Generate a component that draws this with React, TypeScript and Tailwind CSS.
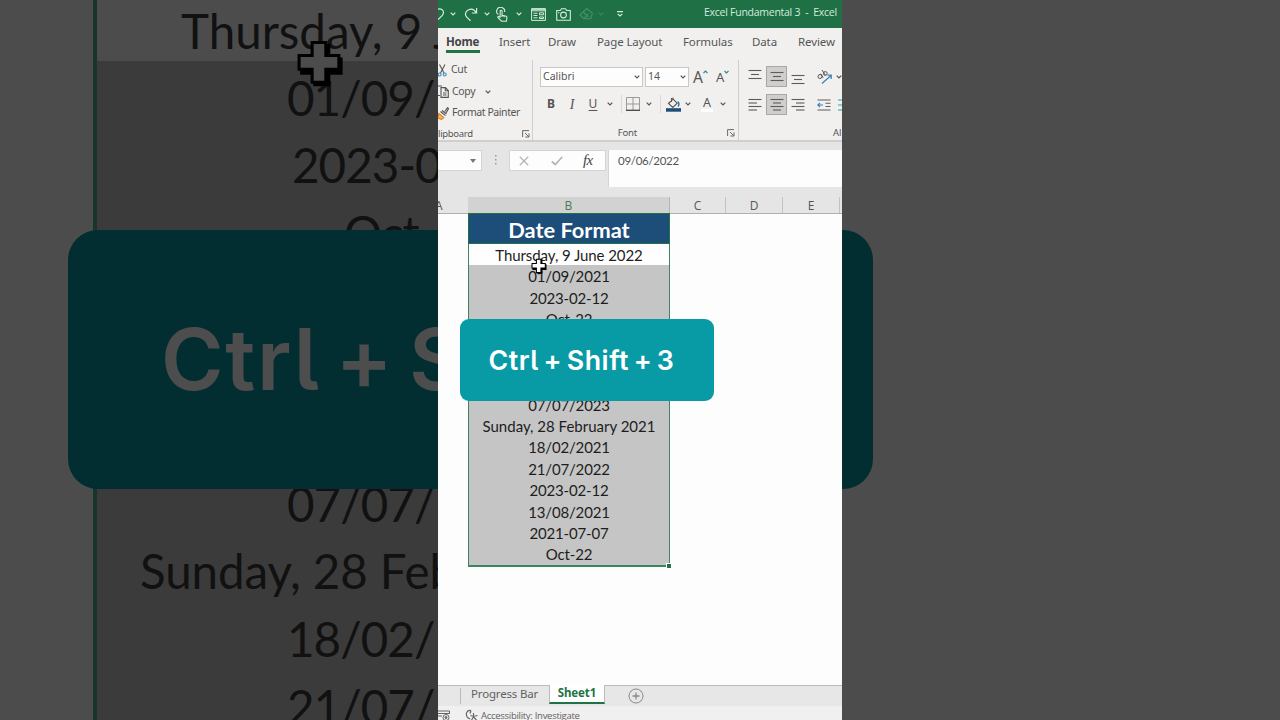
import type { ReactNode } from "react";

// Blank rows sit under the shortcut banner
const dates = [
  "Thursday, 9 June 2022",
  "01/09/2021",
  "2023-02-12",
  "Oct-22",
  "",
  "",
  "",
  "07/07/2023",
  "Sunday, 28 February 2021",
  "18/02/2021",
  "21/07/2022",
  "2023-02-12",
  "13/08/2021",
  "2021-07-07",
  "Oct-22",
];

function Chevron({ className = "" }: { className?: string }) {
  return (
    <svg viewBox="0 0 6 4" className={`h-[4px] w-[6px] shrink-0 ${className}`} fill="none" stroke="currentColor" strokeWidth="1.2">
      <path d="M0.7 0.7 3 3 5.3 0.7" />
    </svg>
  );
}

function Cell({ w, children }: { w: string; children?: ReactNode }) {
  return <div className={`flex shrink-0 items-center justify-center ${w}`}>{children}</div>;
}

function Lines({ rows }: { rows: number[][] }) {
  return (
    <svg viewBox="0 0 14 16" className="h-4 w-3.5" stroke="#5c5c5c" strokeWidth="1.1">
      {rows.map(([x1, x2, y]) => (
        <path key={y} d={`M${x1} ${y}H${x2}`} />
      ))}
    </svg>
  );
}

function Launcher() {
  return (
    <svg viewBox="0 0 8 8" className="h-2 w-2 shrink-0" fill="none" stroke="#5a5a5a" strokeWidth="0.9">
      <path d="M0.6 7V0.6H7M3 3l3.6 3.6M7 3.4V7H3.4" />
    </svg>
  );
}

function Cursor({ className }: { className: string }) {
  return (
    <svg viewBox="0 0 14 14" className={className}>
      <path d="M5 1.4h5v4h3.6v5H10v3.4H5v-3.4H1.2V6H5z" fill="#000" />
      <path d="M4.7 1h4v3.8h3.8v4H8.7v3.8h-4V8.8H0.9v-4h3.8z" fill="#fff" stroke="#000" strokeWidth="0.9" />
    </svg>
  );
}

function TitleBar() {
  return (
    <div className="flex h-7 shrink-0 items-center bg-[#1f7145] text-[#d5eadd]">
      <Cell w="w-2">
        <svg viewBox="0 0 8 14" className="h-3.5 w-2" fill="none" stroke="currentColor" strokeWidth="1.2">
          <path d="M0 2.2c3-.8 5.5.6 5.5 3.6C5.5 8 3 10 0 12.5" />
        </svg>
      </Cell>
      <Cell w="w-3.5"><Chevron /></Cell>
      <Cell w="w-[22px]">
        <svg viewBox="0 0 14 15" className="h-[15px] w-3.5" fill="none" stroke="currentColor" strokeWidth="1.2">
          <path d="M12.6 1v5H7.8M12.3 5.7C10.3 2.5 7 1.6 4.2 3 1.2 4.500.6 8 2.8 10.200L6.5 13.8" />
        </svg>
      </Cell>
      <Cell w="w-2.5"><Chevron /></Cell>
      <Cell w="w-5">
        <svg viewBox="0 0 12 15" className="h-[15px] w-3" fill="none" stroke="currentColor" strokeWidth="1.1">
          <path d="M2.3 7.5A4 4 0 1 1 8.6 5M4.2 10.5V4.3c0-1.4 1.9-1.4 1.9 0v3.9l3.6.8c1 .3 1.3 1 1.2 1.8l-.5 3.4H5.6L2 10.7c-.5-1 .7-1.7 1.4-.9l.8.8M6 8v2M8 8.6v1.7" />
        </svg>
      </Cell>
      <Cell w="w-3.5"><Chevron /></Cell>
      <Cell w="w-6">
        <svg viewBox="0 0 15 13" className="h-[13px] w-[15px]" fill="none" stroke="currentColor" strokeWidth="1">
          <path d="M.6.6h13.8v11.800H.6zM.6 2.800h13.8M.6 1.700h13.8M2.5 5.300h4M2.5 7.500h4M2.5 9.800h4M8.500 4.800h4v2h-4zM8.500 9h4v1.500h-4z" />
        </svg>
      </Cell>
      <Cell w="w-[26px]">
        <svg viewBox="0 0 15 13" className="h-[13px] w-[15px]" fill="none" stroke="currentColor" strokeWidth="1.1">
          <path d="M.7 2.5h3.6L5.5.8h4l1.2 1.7h3.6v9.8H.7z" />
          <circle cx="7.5" cy="7" r="2.9" />
          <path d="M2.3 4.6h1" />
        </svg>
      </Cell>
      <Cell w="w-5">
        <svg viewBox="0 0 15 14" className="h-3.5 w-[15px] text-[#47906a]" fill="none" stroke="currentColor" strokeWidth="1.1">
          <path d="M1 8 7.8 1.5l5.5 4.7-1.5 5.5H5zM4 5l5.5 5M5 11.7l4.5-5" />
        </svg>
      </Cell>
      <Cell w="w-2.5"><Chevron className="text-[#3c8660]" /></Cell>
      <Cell w="w-7">
        <svg viewBox="0 0 6 6" className="h-1.5 w-1.5" fill="none" stroke="currentColor" strokeWidth="1.1">
          <path d="M0 .6h6M.7 2.8 3 5l2.3-2.2" />
        </svg>
      </Cell>
      <span className="ml-[70px] -mt-1 whitespace-pre font-['Open_Sans'] text-[10.5px] font-medium leading-none tracking-[-0.025em]">
        {"Excel Fundamental 3  -  Excel"}
      </span>
    </div>
  );
}

function RibbonTabs() {
  return (
    <div className="flex h-7 shrink-0 bg-[#f1f0ef] pl-2 text-[11.5px] leading-7 tracking-[-0.01em] text-[#555]">
      <div className="w-[53px] shrink-0">
        <div className="h-[25px] w-[34px] border-b-[3px] border-[#217346] font-bold tracking-[-0.02em] text-[#444]">Home</div>
      </div>
      <span className="w-[49px] shrink-0">Insert</span>
      <span className="w-[49px] shrink-0">Draw</span>
      <span className="w-[86px] shrink-0">Page Layout</span>
      <span className="w-[69px] shrink-0">Formulas</span>
      <span className="w-[46px] shrink-0">Data</span>
      <span>Review</span>
    </div>
  );
}

function ClipboardGroup() {
  return (
    <div className="flex w-[95px] shrink-0 flex-col border-r border-[#d0cfce] text-[10.5px] tracking-[-0.03em]">
      <div className="flex h-5 items-center">
        <svg viewBox="0 0 9 13" className="mr-1 h-[13px] w-[9px]" fill="none" strokeWidth="1.1">
          <path d="M1.5.5 6 9M7 .5 2.5 9" stroke="#555" />
          <circle cx="1.6" cy="10.5" r="1.5" stroke="#3a8dbb" />
          <circle cx="6.7" cy="10.5" r="1.5" stroke="#3a8dbb" />
        </svg>
        Cut
      </div>
      <div className="flex h-[23px] items-center">
        <svg viewBox="0 0 11 13" className="mr-[3px] h-[13px] w-[11px]" fill="none" stroke="#555" strokeWidth="1.1">
          <path d="M0 1h4M0 10.5h2M3 2.6h4.5L10.3 5.5v6.9H3zM7.3 2.8v2.9h3M5 8h3.5M5 10h3.5" />
        </svg>
        Copy
        <Chevron className="ml-2.5" />
      </div>
      <div className="flex h-[20px] items-center">
        <svg viewBox="0 0 11 13" className="mr-[3px] h-[13px] w-[11px]" fill="none" strokeWidth="1.2">
          <path d="M.8 6.5 5.8 10.5 3.5 12.5 0 11z" fill="#f3b46a" stroke="#dd8a35" />
          <path d="M2.5 4.5 7.5 8.6M4 3.500 8.5 7M6.8 4.5 9.500.7l1 1-2.3 4" stroke="#555" />
        </svg>
        <span className="tracking-[-0.04em]">Format Painter</span>
      </div>
      <div className="flex h-[22px] items-center justify-between pr-[2px] text-[9.5px]">
        <span>lipboard</span>
        <Launcher />
      </div>
    </div>
  );
}

function FontGroup() {
  return (
    <div className="flex w-[206px] shrink-0 flex-col border-r border-[#d0cfce]">
      <div className="ml-[7px] mt-[7px] flex h-5 items-center text-[10.5px]">
        <div className="flex h-5 w-[103px] items-center justify-between border border-[#c9c8c7] bg-[#fdfdfd] px-0.5">
          Calibri
          <Chevron />
        </div>
        <div className="ml-0.5 flex h-5 w-11 items-center justify-between border border-[#c9c8c7] bg-[#fdfdfd] px-0.5">
          14
          <Chevron />
        </div>
        <div className="ml-1 flex w-[23px] items-start text-[15.5px] leading-[18px]">
          A
          <svg viewBox="0 0 5 4" className="mt-0.5 h-1 w-[5px]" fill="none" stroke="#2b8a8a" strokeWidth="1.1"><path d="M.5 3 2.5 1l2 2" /></svg>
        </div>
        <div className="flex items-start text-[13px] leading-[18px]">
          A
          <svg viewBox="0 0 5 4" className="mt-0.5 h-1 w-[5px]" fill="none" stroke="#2b8a8a" strokeWidth="1.1"><path d="M.5 1l2 2 2-2" /></svg>
        </div>
      </div>
      <div className="mt-[7px] flex h-5 items-center pl-2 text-[12px]">
        <Cell w="w-5"><b>B</b></Cell>
        <Cell w="w-[22px]"><i className="font-['Liberation_Serif'] text-[14px]">I</i></Cell>
        <Cell w="w-5"><span className="underline underline-offset-2">U</span></Cell>
        <Cell w="w-3.5"><Chevron /></Cell>
        <div className="ml-1 h-[18px] w-px bg-[#dad9d8]" />
        <Cell w="w-[22px]">
          <svg viewBox="0 0 14 14" className="h-3.5 w-3.5" fill="none" stroke="#999" strokeWidth="1">
            <path d="M.5 13V.5h13V13M7 .5V13M.5 7h13" />
            <path d="M0 13.3h14" stroke="#444" strokeWidth="1.3" />
          </svg>
        </Cell>
        <Cell w="w-2.5"><Chevron /></Cell>
        <div className="ml-[6px] h-[18px] w-px bg-[#dad9d8]" />
        <Cell w="w-[24px]">
          <svg viewBox="0 0 15 15" className="h-[15px] w-[15px]" fill="none" stroke="#555" strokeWidth="1.1">
            <path d="M2.5 6.5 7 2l4.2 4.2-4.4 4.3zM7 2V.5M5.5 1v4" />
            <path d="M11.7 4.5c1.5 1.5 1.5 3.5.3 5" stroke="#2377b0" strokeWidth="1.4" />
            <path d="M0 11.2h15v3.5H0z" fill="#1d4e79" stroke="none" />
          </svg>
        </Cell>
        <Cell w="w-1.5"><Chevron /></Cell>
        <Cell w="w-8">
          <span className="flex h-4 w-3 items-start justify-center border-b-[3px] border-white text-[12.5px] leading-[13px]">A</span>
        </Cell>
        <Cell w="w-0"><Chevron /></Cell>
      </div>
      <div className="mt-2 flex h-[22px] items-center justify-end pr-[3px] text-[9.5px]">
        <span className="mr-[90px] tracking-[-0.02em]">Font</span>
        <Launcher />
      </div>
    </div>
  );
}

function AlignmentGroup() {
  return (
    <div className="flex w-[103px] shrink-0 flex-col pl-[5px]">
      <div className="mt-1.5 flex h-[21px] items-center">
        <Cell w="w-[22px]"><Lines rows={[[0.5, 13.5, 1.5], [3, 11, 5.5], [0.5, 13.5, 9.5]]} /></Cell>
        <div className="flex h-[21px] w-[21px] shrink-0 items-center justify-center border border-[#a8a7a6] bg-[#cfcecd]">
          <Lines rows={[[0.5, 13.5, 3.5], [3, 11, 7.5], [0.5, 13.5, 11.5]]} />
        </div>
        <Cell w="w-[22px]"><Lines rows={[[0.5, 13.5, 6.5], [3, 11, 10.5], [0.5, 13.5, 14.5]]} /></Cell>
        <div className="ml-[3px] h-[18px] w-px bg-[#dad9d8]" />
        <svg viewBox="0 0 16 16" className="ml-[5px] h-4 w-4 shrink-0" fill="none">
          <path d="M5 14.5 14 6.5M10.5 6.2h3.7v3.7" stroke="#3a86b5" strokeWidth="1.3" />
          <circle cx="3" cy="7.5" r="2" stroke="#555" />
          <path d="m3.8 4.8 2.4 4M5 1l3.3 5" stroke="#555" />
          <circle cx="8.3" cy="4.5" r="1.9" stroke="#555" />
        </svg>
        <Chevron className="ml-[3px]" />
      </div>
      <div className="mt-[7px] flex h-[21px] items-center">
        <Cell w="w-[22px]"><Lines rows={[[0.5, 13.5, 2.5], [0.5, 9, 6], [0.5, 13.5, 9.5], [0.5, 9, 13]]} /></Cell>
        <div className="flex h-[21px] w-[21px] shrink-0 items-center justify-center border border-[#a8a7a6] bg-[#cfcecd]">
          <Lines rows={[[0.5, 13.5, 2.5], [3, 11, 6], [0.5, 13.5, 9.5], [3, 11, 13]]} />
        </div>
        <Cell w="w-[22px]"><Lines rows={[[0.5, 13.5, 2.5], [5, 13.5, 6], [0.5, 13.5, 9.5], [5, 13.5, 13]]} /></Cell>
        <div className="ml-[3px] h-[18px] w-px bg-[#dad9d8]" />
        <svg viewBox="0 0 14 14" className="ml-[5px] h-3.5 w-3.5 shrink-0" fill="none" stroke="#5c5c5c" strokeWidth="1.1">
          <path d="M.5 2h13M8.5 5.2h5M8.5 8.5h5M.5 12h13" />
          <path d="M6 7H1M3 4.8.8 7 3 9.2" stroke="#2f86bd" strokeWidth="1.2" />
        </svg>
        <svg viewBox="0 0 4 14" className="ml-[7px] h-3.5 w-1 shrink-0" fill="none" stroke="#2fa59b" strokeWidth="1.1">
          <path d="M0 2h4M0 7h4M0 12h4" />
        </svg>
      </div>
      <div className="mt-[7px] flex h-[22px] items-center pl-[89px] text-[9.5px]">Al</div>
    </div>
  );
}

function FormulaBar() {
  return (
    <div className="flex h-[57px] shrink-0 items-start border-t-2 border-[#d0cfcd] bg-[#e5e5e5] pt-2 text-[#666]">
      <div className="flex h-[21px] w-11 shrink-0 items-center justify-end border border-l-0 border-[#d4d4d4] bg-[#fdfdfd]">
        <svg viewBox="0 0 6 4" className="mr-[5px] h-1 w-1.5 fill-[#777]"><path d="M0 0h6L3 4z" /></svg>
      </div>
      <svg viewBox="0 0 2 10" className="ml-[13px] mt-[5px] h-2.5 w-0.5 shrink-0 fill-[#999]">
        <path d="M0 0h1.5v1.5H0zM0 4h1.5v1.5H0zM0 8h1.5v1.5H0z" />
      </svg>
      <div className="ml-3 flex h-[21px] w-[97px] shrink-0 items-center border border-[#d4d4d4] bg-[#fdfdfd]">
        <svg viewBox="0 0 10 10" className="ml-[9px] h-2.5 w-2.5" fill="none" stroke="#b5b5b5" strokeWidth="1.3"><path d="m.8.8 8.4 8.4M9.2.8.8 9.2" /></svg>
        <svg viewBox="0 0 12 10" className="ml-[22px] h-2.5 w-3" fill="none" stroke="#b5b5b5" strokeWidth="1.7"><path d="m.8 5.5 3.5 3L11.2 1" /></svg>
        <span className="ml-5 font-['Liberation_Serif'] text-[15px] italic leading-none tracking-[-0.04em] text-[#444]">fx</span>
      </div>
      <div className="ml-[2px] h-[37px] flex-1 border-l border-[#d4d4d4] bg-[#fdfdfd] pl-[9px] font-['Lato'] text-[11.5px] leading-[22px] tracking-[-0.025em] text-[#555]">
        09/06/2022
      </div>
    </div>
  );
}

function ColumnHeads() {
  return (
    <div className="flex h-[17px] shrink-0 border-b border-[#b0b0b0] bg-[#e5e5e5] text-center font-['Open_Sans'] text-[12px] leading-[17px] text-[#555]">
      <div className="w-[30px] shrink-0 pr-[26px]"><span className="-ml-[3px]">A</span></div>
      <div className="w-[202px] shrink-0 border-r border-[#b5b5b5] bg-[#d1d2d1] text-[#4b7a5d]">B</div>
      <div className="w-[56px] shrink-0 border-r border-[#c2c2c2]">C</div>
      <div className="w-[57px] shrink-0 border-r border-[#c2c2c2]">D</div>
      <div className="w-[57px] shrink-0 border-r border-[#c2c2c2]">E</div>
    </div>
  );
}

function Sheet() {
  return (
    <div className="-mt-px flex h-[472px] shrink-0 items-start pl-[30px]">
      <div className="relative w-[202px] font-['Lato'] text-[15px] text-[#1d1d1d]">
        <div className="h-[31px] border border-[#217346] bg-[#1c4e79] text-center text-[21.8px] font-bold leading-[32px] text-white">
          Date Format
        </div>
        <div className="border-x-[1.5px] border-b-2 border-[#3f8461] bg-[#c5c5c5] text-center tracking-[-0.01em]">
          {dates.map((date, i) => (
            <div key={i} className="h-[21.38px] leading-[23.4px] first:bg-[#fefefe] first:tracking-[-0.005em] nth-9:tracking-normal">{date}</div>
          ))}
        </div>
        <div className="absolute -bottom-px -right-px h-1 w-1 bg-[#217346] outline outline-white" />
        <Cursor className="absolute left-[63px] top-[45px] h-4 w-4" />
      </div>
    </div>
  );
}

function Footer() {
  return (
    <div className="flex h-[35px] shrink-0 flex-col text-[#5f5f5f]">
      <div className="flex h-[21px] shrink-0 items-start border-t border-[#bcbcbc] bg-[#e8e7e7] text-[11.5px] leading-[15px]">
        <div className="ml-[22px] mt-0.5 h-4 border-l border-[#bbb]" />
        <span className="ml-[10px] w-[78px] shrink-0 whitespace-nowrap tracking-[-0.015em]">Progress Bar</span>
        <div className="-mt-px h-[19px] w-[56px] shrink-0 border-x border-b-2 border-x-[#bbb] border-b-[#217346] bg-white text-center font-bold leading-[16px] tracking-[-0.01em] text-[#217346]">
          Sheet1
        </div>
        <svg viewBox="0 0 16 16" className="ml-[23px] mt-[2px] h-4 w-4" fill="none" stroke="#888" strokeWidth="1">
          <circle cx="8" cy="8" r="7" />
          <path d="M8 4.5v7M4.5 8h7" strokeWidth="1.3" />
        </svg>
      </div>
      <div className="flex h-3.5 items-start bg-[#f1f0f0] pt-[3px] text-[9.5px] leading-[13px]">
        <svg viewBox="0 0 12 11" className="mt-px h-[11px] w-3 shrink-0" fill="none" stroke="#666" strokeWidth="1">
          <path d="M0 1h11.5v3M0 3.5h11M0 6h4" />
          <circle cx="8" cy="7.5" r="3" />
          <circle cx="8" cy="7.5" r="1" fill="#666" />
        </svg>
        <svg viewBox="0 0 14 11" className="ml-[15px] h-[11px] w-3.5 shrink-0" fill="none" stroke="#666" strokeWidth="1.2">
          <path d="M6 1.5C2 .5 0 5 2.5 8.500L5 10M6 1.500l-1 3M8.500 4v4M5.500 6.500l3 1 4-1M8.500 8l-2 3M8.500 8l3 3" />
        </svg>
        <span className="ml-[2px] whitespace-nowrap font-['Open_Sans'] tracking-[-0.03em]">Accessibility: Investigate</span>
      </div>
    </div>
  );
}

// Enlarged, dimmed continuation of the sheet on both sides of the portrait frame
function LeftWing() {
  return (
    <div className="relative h-[720px] w-[438px] shrink-0 overflow-hidden bg-[#4c4c4c] pl-[93px]">
      <div className="h-full border-l-4 border-[#18352a] bg-[#3b3b3b] font-['Lato'] text-[47.5px] leading-[74px] text-[#111] *:h-[67.7px] *:whitespace-nowrap">
        <div className="h-[60.5px]! bg-[#4c4c4c] pl-[84px] leading-[61px]">Thursday, 9 J</div>
        <div className="pl-[190px] tracking-[-0.02em]">01/09/</div>
        <div className="pl-[195px] tracking-[-0.02em]">2023-0</div>
        <div className="pl-[247px] tracking-[-0.02em]">Oct-</div>
        <div />
        <div />
        <div />
        <div className="pl-[190px] tracking-[-0.02em]">07/07/</div>
        <div className="pl-[43px] tracking-[-0.002em]">Sunday, 28 Feb</div>
        <div className="pl-[190px] tracking-[-0.02em]">18/02/</div>
        <div className="h-[52px]! pl-[190px] tracking-[-0.02em]">21/07/</div>
      </div>
      <Cursor className="absolute left-[296px] top-[39px] h-[48px] w-[48px] brightness-[0.3]" />
      <div className="absolute left-[68px] top-[230px] flex h-[259px] w-[370px] items-center rounded-l-[30px] bg-[#032e31] pl-[93px] font-['Inter'] text-[85px] font-semibold tracking-[0.02em] text-[#4d4d4d] [font-feature-settings:'cv05'] [word-spacing:-0.1em]">
        <span className="whitespace-nowrap">Ctrl + S</span>
      </div>
    </div>
  );
}

function RightWing() {
  return (
    <div className="flex h-[720px] flex-1 items-start bg-[#4c4c4c] pt-[230px]">
      <div className="h-[259px] w-[31px] rounded-r-[30px] bg-[#032e31]" />
    </div>
  );
}

export default function App() {
  return (
    <div className="flex h-[720px] w-[1280px] overflow-hidden">
      <LeftWing />
      <main className="relative flex h-[720px] w-[404px] shrink-0 flex-col overflow-hidden bg-[#fdfdfd] font-['Noto_Sans',sans-serif] text-[#555]">
        <TitleBar />
        <RibbonTabs />
        <div className="flex h-[84px] shrink-0 items-start bg-[#f1f0ef] pt-1">
          <ClipboardGroup />
          <FontGroup />
          <AlignmentGroup />
        </div>
        <FormulaBar />
        <ColumnHeads />
        <Sheet />
        <Footer />
        <div className="absolute left-[21.5px] top-[319px] flex h-[82px] w-[254px] items-center rounded-[9px] bg-[#089ba6] pl-[29px] font-['Inter'] text-[26.8px] font-semibold tracking-[0.02em] text-white [font-feature-settings:'cv05'] [word-spacing:-0.1em]">
          <span className="whitespace-nowrap">Ctrl + Shift + 3</span>
        </div>
      </main>
      <RightWing />
    </div>
  );
}
